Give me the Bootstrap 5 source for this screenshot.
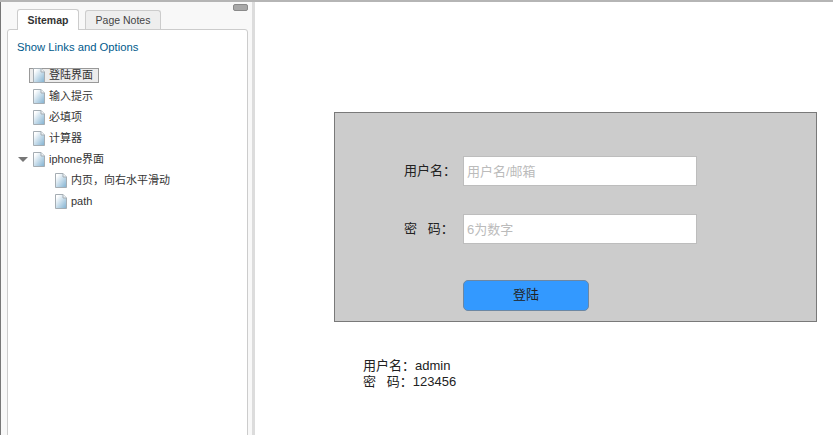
<!DOCTYPE html>
<html lang="zh"><head><meta charset="utf-8"><title>Sitemap</title>
<link rel="stylesheet" href="https://cdn.jsdelivr.net/npm/bootstrap@5.3.0/dist/css/bootstrap.min.css">
<style>
html,body{height:100%;overflow:hidden}
body{font-family:"Liberation Sans","Noto Sans CJK SC",sans-serif;font-size:12px;color:#333;background:#fff}
.shell{height:435px;border-top:2px solid #b5b5b5}
.pane{width:252px;background:#f8f8f8;border-left:1px solid #777;position:relative;padding:7px 4px 0 6px}
.divider{width:3px;background:#dcdcdc}
.grip{position:absolute;top:2px;right:4px;width:15px;height:7px;background:#a8a8a8;border:1px solid #8a8a8a;border-radius:2px}
.tabrow{padding-left:10px;height:20px;gap:6px;align-items:flex-end;position:relative;z-index:1}
.tabon,.taboff{display:block;text-align:center;border:1px solid #ccc;border-bottom:0;border-radius:3px 3px 0 0;font-size:10.5px}
.tabon{width:62px;height:21px;line-height:20px;background:#fff;font-weight:700;color:#333;position:relative;top:1px}
.taboff{width:76px;height:19px;line-height:18px;background:#eee;color:#444}
.sheet{height:415px;background:#fff;border:1px solid #ccc;border-radius:3px 3px 0 0;padding:10px 0 0 9px}
.optlink{color:#005a8c;text-decoration:none;font-size:11.25px;line-height:15px;display:block}
.tree{margin:10px 0 0 0;padding:0;list-style:none}
.node{height:21px;display:flex;align-items:center;padding-left:16px;color:#333;font-size:11px;white-space:nowrap}
.node.sub{padding-left:38px}
.node svg{flex:none;width:12px;height:15px;margin-right:4px}
.arrow{position:absolute;width:0;height:0;border-left:5px solid transparent;border-right:5px solid transparent;border-top:5px solid #777;margin-left:-15px}
.picked{display:flex;align-items:center;height:15px;margin-left:-4px;padding:0 5px 0 3px;background:#ececec;border:1px solid #999}
.stage{padding:110px 16px 0 79px}
.loginbox{width:483px;height:210px;background:#ccc;border:1px solid #797979;padding:43px 0 0 0}
.field{height:30px;margin-bottom:28px;display:flex;align-items:center}
.field label{width:128px;padding-left:69px;font-size:13px;color:#222;white-space:pre}
.field input{width:234px;height:30px;border:1px solid #bdbdbd;border-radius:0;padding:2px 3px;font-size:13px;font-family:inherit;background:#fff;box-shadow:none}
.field input::placeholder{color:#bbb;opacity:1}
.loginbtn{display:block;margin:36px 0 0 128px;width:126px;height:31px;padding:0 0 2px;font-size:13px;color:#222;background:#39f;border:1px solid #6c87a3;border-radius:5px}
.hint{margin:36px 0 0 29px;font-size:13px;line-height:16px;color:#222;white-space:pre}
</style></head>
<body>
<svg width="0" height="0" class="d-block position-absolute"><defs>
<linearGradient id="pg" x1="0" y1="0" x2="1" y2="1"><stop offset="0.15" stop-color="#fff"/><stop offset="1" stop-color="#7fb0d0"/></linearGradient>
<symbol id="doc" viewBox="0 0 12 15"><path d="M.5.5H8L11.5 4V14.5H.5Z" fill="url(#pg)" stroke="#a5adb3"/><path d="M8 .5V4H11.5" fill="#eef3f6" stroke="#a5adb3"/></symbol>
</defs></svg>
<div class="shell d-flex">
  <aside class="pane flex-shrink-0">
    <span class="grip"></span>
    <div class="tabrow d-flex"><a class="tabon text-decoration-none" href="#">Sitemap</a><a class="taboff text-decoration-none" href="#">Page Notes</a></div>
    <div class="sheet">
      <a class="optlink" href="#">Show Links and Options</a>
      <ul class="tree">
        <li class="node"><span class="picked"><svg><use href="#doc"/></svg>登陆界面</span></li>
        <li class="node"><svg><use href="#doc"/></svg>输入提示</li>
        <li class="node"><svg><use href="#doc"/></svg>必填项</li>
        <li class="node"><svg><use href="#doc"/></svg>计算器</li>
        <li class="node"><span class="arrow"></span><svg><use href="#doc"/></svg>iphone界面</li>
        <li class="node sub"><svg><use href="#doc"/></svg>内页，向右水平滑动</li>
        <li class="node sub"><svg><use href="#doc"/></svg>path</li>
      </ul>
    </div>
  </aside>
  <div class="divider flex-shrink-0"></div>
  <main class="stage flex-grow-1">
    <form class="loginbox" onsubmit="return false">
      <div class="field"><label>用户名：</label><input class="form-control" placeholder="用户名/邮箱"></div>
      <div class="field"><label>密   码：</label><input class="form-control" placeholder="6为数字"></div>
      <button class="btn loginbtn" type="button">登陆</button>
    </form>
    <p class="hint">用户名：admin
密   码：123456</p>
  </main>
</div>
</body></html>
